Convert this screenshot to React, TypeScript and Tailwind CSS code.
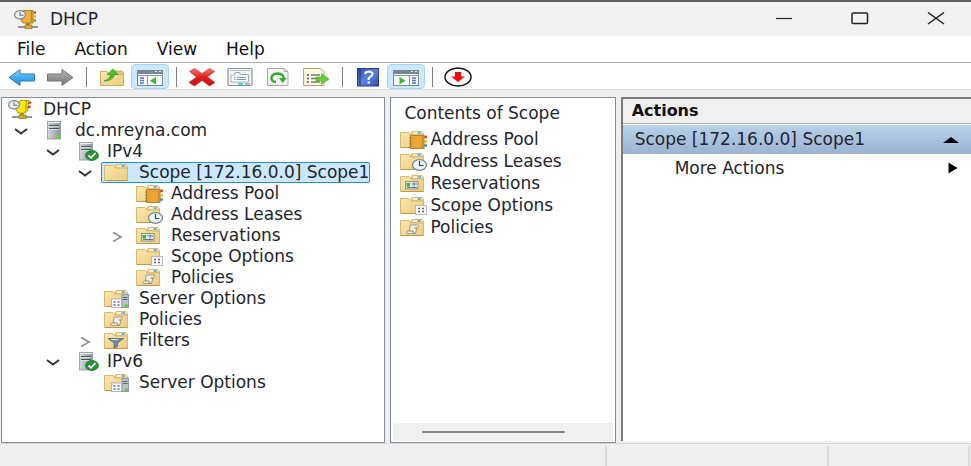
import React from "react";

type IconName =
  | "dhcp"
  | "server"
  | "serverOk"
  | "folder"
  | "pool"
  | "leases"
  | "reservations"
  | "scopeOptions"
  | "policies"
  | "serverOptions"
  | "filters";

function Gradients() {
  return (
    <svg className="absolute size-0" aria-hidden="true">
      <defs>
        <linearGradient id="folderFill" x1="0" y1="0" x2="1" y2="1">
          <stop offset="0" stopColor="#fce7b0" />
          <stop offset="1" stopColor="#ebca7c" />
        </linearGradient>
        <linearGradient id="blueFill" x1="0" y1="0" x2="0" y2="1">
          <stop offset="0" stopColor="#8fd4fb" />
          <stop offset="0.5" stopColor="#42aef0" />
          <stop offset="1" stopColor="#1f86d0" />
        </linearGradient>
        <linearGradient id="grayFill" x1="0" y1="0" x2="0" y2="1">
          <stop offset="0" stopColor="#b5b5b5" />
          <stop offset="1" stopColor="#777777" />
        </linearGradient>
        <linearGradient id="serverFill" x1="0" y1="0" x2="1" y2="0">
          <stop offset="0" stopColor="#d3dade" />
          <stop offset="1" stopColor="#8b969c" />
        </linearGradient>
        <linearGradient id="redFill" x1="0" y1="0" x2="0" y2="1">
          <stop offset="0" stopColor="#f47a7a" />
          <stop offset="0.5" stopColor="#dc2020" />
          <stop offset="1" stopColor="#c81010" />
        </linearGradient>
        <linearGradient id="helpFill" x1="0" y1="0" x2="1" y2="1">
          <stop offset="0" stopColor="#2c48a4" />
          <stop offset="0.5" stopColor="#5f83da" />
          <stop offset="1" stopColor="#2f4fae" />
        </linearGradient>
      </defs>
    </svg>
  );
}

function Folder() {
  return (
    <g>
      <path d="M10 5 L12 1.500 H22 L23.500 3.500 V8 H10Z" fill="#edcf82" stroke="#cfae60" strokeWidth="0.800" />
      <path d="M13 3 H22" stroke="#fff" strokeWidth="1.400" />
      <path d="M17.500 3 H21" stroke="#3d9be0" strokeWidth="1.400" />
      <path d="M0.500 2.500 H9 L11 5 H23.500 V17.500 H0.500Z" fill="url(#folderFill)" stroke="#d2b268" strokeWidth="0.900" />
      <path d="M1 17.500 H23.500" stroke="#bd9950" strokeWidth="1" />
    </g>
  );
}

function Server({ x }: { x: number }) {
  return (
    <g transform={`translate(${x} 0)`}>
      <rect x="0.500" y="0.500" width="13" height="17.500" fill="url(#serverFill)" stroke="#8b959b" strokeWidth="0.800" />
      <path d="M1 1.500 H13" stroke="#eef2f4" />
      <path d="M2 4.500 H12 M2 7.500 H12" stroke="#4c565c" strokeWidth="1.200" />
      <path d="M2 5.500 H12 M2 8.500 H12" stroke="#eef2f4" strokeWidth="0.600" />
      <rect x="8.500" y="14.500" width="4" height="2.500" fill="#63e01f" />
    </g>
  );
}

function Icon({ name, bright = true }: { name: IconName; bright?: boolean }) {
  return (
    <svg viewBox="0 0 28 19" className="h-[19px] w-7 shrink-0" aria-hidden="true">
      {name === "dhcp" && (
        <g>
          <path d="M4 17 H24" stroke="#8a8a8a" strokeWidth="1.800" />
          <path d="M14 11 V16" stroke={bright ? "#b5a514" : "#b9821c"} strokeWidth="4" />
          <rect x="11" y="15" width="7" height="3.500" fill={bright ? "#c5b51a" : "#e0a526"} stroke="#7c6514" strokeWidth="0.600" />
          <path
            d={bright ? "M12 0.500 H21 L19.500 11 L17 13 H10 L8 9.500Z" : "M9 0.500 H19 V13 H9 L7.500 11Z"}
            fill={bright ? "#f5ea14" : "#eeb03a"}
            stroke={bright ? "#a5980e" : "#a97417"}
            strokeWidth="0.900"
          />
          <path
            d={bright ? "M18.500 1 L17.500 12" : "M17.500 1 V12.500"}
            stroke={bright ? "#c2b512" : "#c48822"}
            strokeWidth="1.500"
          />
          {bright ? (
            <path d="M20.500 3.500 L23 2 M20 8 L22.500 6" stroke="#e6231f" strokeWidth="2" />
          ) : (
            <g strokeWidth="2.200">
              <path d="M19.500 2.500 H22" stroke="#e6331f" />
              <path d="M19.500 6.500 H22" stroke="#e8a52b" />
              <path d="M19.500 10.500 H22" stroke="#3fa368" />
            </g>
          )}
          <ellipse cx="6" cy="4.800" rx="5.400" ry="4.200" fill="#edf1f4" stroke="#8a9096" strokeWidth="1.300" />
          <path d="M6 2 V5.300 H9.500" fill="none" stroke="#66707a" strokeWidth="1.100" />
        </g>
      )}
      {name === "server" && <Server x={7} />}
      {name === "serverOk" && (
        <g>
          <Server x={7} />
          <ellipse cx="20" cy="13.500" rx="6.500" ry="5" fill="#279335" stroke="#167024" strokeWidth="0.700" />
          <path d="M16.500 13.500 L19 15.800 L23.500 11" fill="none" stroke="#fff" strokeWidth="1.800" />
        </g>
      )}
      {!["dhcp", "server", "serverOk"].includes(name) && <Folder />}
      {name === "pool" && (
        <g>
          <path d="M24 7 H27" stroke="#e5432b" strokeWidth="2.600" />
          <path d="M24 11.500 H27" stroke="#efc32a" strokeWidth="2.600" />
          <path d="M24 15.500 H27" stroke="#3f9bd8" strokeWidth="2.600" />
          <rect x="10.500" y="5.500" width="13.500" height="13" fill="#eba536" stroke="#b37a20" strokeWidth="0.900" />
          <path d="M9 8 H11.500 M9 11 H11.500 M9 14 H11.500 M9 17 H11.500" stroke="#7c7058" strokeWidth="0.900" />
          <path d="M22.500 6 V18" stroke="#c98a28" strokeWidth="1.200" />
        </g>
      )}
      {name === "leases" && (
        <g>
          <ellipse cx="19.500" cy="13" rx="7" ry="5.300" fill="#e8f4f8" stroke="#7b888f" strokeWidth="1.300" />
          <path d="M19.500 9 V13.500 H23.500" fill="none" stroke="#34464f" strokeWidth="1.200" />
        </g>
      )}
      {name === "reservations" && (
        <g>
          <rect x="5.500" y="7.500" width="12.500" height="7.500" fill="#e4ebe8" stroke="#8f8d78" strokeWidth="0.900" />
          <rect x="6.500" y="9" width="3.500" height="3.500" fill="#38b642" />
          <path d="M11.500 10 H17 M7 13.500 H17" stroke="#647a8c" strokeWidth="1.200" />
          <path d="M14 8 V14.500" stroke="#647a8c" strokeWidth="0.800" />
        </g>
      )}
      {name === "scopeOptions" && (
        <g>
          <rect x="15.500" y="9.500" width="11" height="9" fill="#f8f8f8" stroke="#b5b5b5" strokeWidth="0.900" />
          <path d="M18 12.500 H20 M22 12.500 H24 M18 15.500 H20 M22 15.500 H24" stroke="#5f6579" strokeWidth="1.500" />
        </g>
      )}
      {name === "policies" && (
        <g>
          <path
            d="M10 7 H18 Q19.500 9 17 10 L15.500 15.500 H7 Q5.500 13.500 8 13 H9.500Z"
            fill="#efeee2"
            stroke="#98937c"
            strokeWidth="0.900"
          />
          <path d="M9.500 13 H13 Q13 15 15 15.500 M17 10 H14.500" fill="none" stroke="#807b68" strokeWidth="0.900" />
        </g>
      )}
      {name === "serverOptions" && (
        <g>
          <rect x="7.500" y="10" width="10.500" height="8.500" fill="#f8f8f8" stroke="#b0b0b0" strokeWidth="0.900" />
          <path d="M9.500 13 H11.500 M13.500 13 H15.500 M9.500 16 H11.500 M13.500 16 H15.500" stroke="#5f6b90" strokeWidth="1.500" />
          <rect x="18" y="5.500" width="6.500" height="13" fill="#bac3c8" stroke="#87939a" strokeWidth="0.900" />
          <path d="M19 8.500 H23.500 M19 10.500 H23.500" stroke="#56636b" />
          <rect x="20.500" y="15.500" width="3.500" height="2.200" fill="#4fd51c" />
        </g>
      )}
      {name === "filters" && (
        <g>
          <path d="M4 7.500 H19.500 L13.500 12 V15.500 L10 17 V12Z" fill="#6f8ea6" stroke="#4a677d" strokeWidth="0.800" />
          <path d="M7 8.500 H14" stroke="#d4e4ee" />
        </g>
      )}
    </svg>
  );
}

interface Node {
  label: string;
  icon: IconName;
  open?: boolean;
  selected?: boolean;
  children?: Node[];
}

const server: Node = {
  label: "dc.mreyna.com",
  icon: "server",
  open: true,
  children: [
    {
      label: "IPv4",
      icon: "serverOk",
      open: true,
      children: [
        {
          label: "Scope [172.16.0.0] Scope1",
          icon: "folder",
          open: true,
          selected: true,
          children: [
            { label: "Address Pool", icon: "pool" },
            { label: "Address Leases", icon: "leases" },
            { label: "Reservations", icon: "reservations", open: false },
            { label: "Scope Options", icon: "scopeOptions" },
            { label: "Policies", icon: "policies" },
          ],
        },
        { label: "Server Options", icon: "serverOptions" },
        { label: "Policies", icon: "policies" },
        { label: "Filters", icon: "filters", open: false },
      ],
    },
    {
      label: "IPv6",
      icon: "serverOk",
      open: true,
      children: [{ label: "Server Options", icon: "serverOptions" }],
    },
  ],
};

const contents: { label: string; icon: IconName }[] = [
  { label: "Address Pool", icon: "pool" },
  { label: "Address Leases", icon: "leases" },
  { label: "Reservations", icon: "reservations" },
  { label: "Scope Options", icon: "scopeOptions" },
  { label: "Policies", icon: "policies" },
];

function TreeNode({ node }: { node: Node }) {
  const expandable = node.open !== undefined;
  return (
    <li role="treeitem" aria-expanded={node.open} aria-selected={!!node.selected}>
      <div className="flex h-[21px] items-center">
        {expandable ? (
          <button aria-label={`Toggle ${node.label}`} className="flex h-full w-8 shrink-0 items-center justify-center">
            <svg viewBox="0 0 14 12" className="h-3 w-3.5" fill="none" aria-hidden="true">
              {node.open ? (
                <path d="M1 4 L7 8.500 L13 4" stroke="#333" strokeWidth="2" />
              ) : (
                <path d="M3 2.500 L11 7 L3 11.500" stroke="#959595" strokeWidth="1.800" />
              )}
            </svg>
          </button>
        ) : (
          <span className="w-8 shrink-0" />
        )}
        <div
          className={
            node.selected
              ? "flex h-[21px] items-center gap-[7px] rounded-xs bg-[#cce8ff] pr-px pl-[3px] outline-1 -outline-offset-1 outline-[#2a8ad8]"
              : "flex h-[21px] items-center gap-[7px] pl-[3px]"
          }
        >
          <Icon name={node.icon} />
          <span className="whitespace-nowrap">{node.label}</span>
        </div>
      </div>
      {node.children && (
        <ul role="group" className="pl-8">
          {node.children.map((child) => (
            <TreeNode key={child.label} node={child} />
          ))}
        </ul>
      )}
    </li>
  );
}

function ToolButton({ label, active, children }: { label: string; active?: boolean; children: React.ReactNode }) {
  return (
    <button
      aria-label={label}
      className={
        active
          ? "flex h-[25px] w-[38px] items-center justify-center rounded-sm border border-[#a3d3f7] bg-[#cce8ff]"
          : "flex h-[25px] w-[38px] items-center justify-center"
      }
    >
      <svg viewBox="0 0 28 20" className="h-5 w-7 shrink-0" fill="none" aria-hidden="true">
        {children}
      </svg>
    </button>
  );
}

function Separator() {
  return (
    <span className="flex w-3.5 justify-center">
      <span className="h-5 w-px bg-[#808080]" />
    </span>
  );
}

function Toolbar() {
  return (
    <div role="toolbar" className="flex h-[27px] shrink-0 items-center border-b border-[#dcdcdc] bg-white pt-px pl-[3px]">
      <ToolButton label="Back">
        <path d="M1 10.500 L12 2.500 V7 H26.500 V14 H12 V18.500Z" fill="url(#blueFill)" stroke="#2b7fba" />
      </ToolButton>
      <ToolButton label="Forward">
        <path d="M27 10.500 L16 2.500 V7 H1.500 V14 H16 V18.500Z" fill="url(#grayFill)" stroke="#737373" />
      </ToolButton>
      <Separator />
      <ToolButton label="Up one level">
        <path d="M13 4 H24 L25.500 6 V18 H13Z" fill="#e9c873" stroke="#c9a85c" />
        <path d="M2.500 4.500 H9 L11.500 7.500 H25.500 V18.500 H2.500Z" fill="url(#folderFill)" stroke="#cdac62" />
        <path d="M6 14 Q12 12 12.500 7.500 H9 L15 2 L20 7.500 H16.500 Q15 14 6 14Z" fill="#4cc22f" stroke="#31921c" strokeWidth="0.700" />
      </ToolButton>
      <ToolButton label="Show or hide console tree" active>
        <rect x="1.500" y="3.500" width="25" height="15" fill="#f7f8fa" stroke="#7f8995" />
        <path d="M1 5 H27" stroke="#7b8693" strokeWidth="4" />
        <path d="M19 4.500 H21 M23 4.500 H25" stroke="#e8eef4" />
        <path d="M1.500 8.500 H26.500 M11.500 8.500 V18" stroke="#8e98a3" />
        <path d="M4 11 H8 M4 13.500 H8 M4 16 H8" stroke="#4c7db4" strokeWidth="1.500" />
        <path d="M20 10 V17.500 L14 13.750Z" fill="#3db52c" />
      </ToolButton>
      <Separator />
      <ToolButton label="Delete">
        <path
          d="M1.500 4.500 L6.500 1.500 L14 6.500 L21.500 1.500 L26.500 4.500 L19.500 10 L27 15.500 L21.500 19 L14 13.500 L6.500 19 L1 15.500 L8.500 10Z"
          fill="url(#redFill)"
          stroke="#c93030"
          strokeWidth="0.700"
        />
      </ToolButton>
      <ToolButton label="Properties">
        <rect x="2" y="1.500" width="24" height="17" rx="1" fill="#f3f5f7" stroke="#8c949d" strokeWidth="1.200" />
        <path d="M4 3.500 H24" stroke="#b6bdc5" />
        <path d="M5 8 H9 V5.500 H14 V7.500 H22.500 V15 H5Z" fill="#fff" stroke="#9cabbc" />
        <path d="M8 10.500 H9.500 M11 10.500 H20 M8 12.500 H9.500 M11 12.500 H20" stroke="#7e93ad" />
        <path d="M12 17 H17" stroke="#20c4ee" strokeWidth="1.500" />
        <path d="M19 17 H24" stroke="#9aa2aa" strokeWidth="1.500" />
      </ToolButton>
      <ToolButton label="Refresh">
        <path d="M3.500 1.500 H20 L24 4.500 V18.500 H3.500Z" fill="#f5f5f3" stroke="#a7a7a7" />
        <path d="M20 1.500 V4.500 H24" stroke="#a7a7a7" />
        <path d="M12 15 Q7 14.500 7.500 10.500 Q8.500 6.500 14 6.500 Q19.500 7 19.500 11" stroke="#36ad35" strokeWidth="2.500" />
        <path d="M15 11 H23 L18.500 16Z" fill="#36ad35" />
      </ToolButton>
      <ToolButton label="Export list">
        <path d="M1.500 1.500 H18 L22 4.500 V18.500 H1.500Z" fill="#fdf9df" stroke="#aca681" />
        <path d="M5 8 H7 M5 11.500 H7 M5 15 H7" stroke="#524b8a" strokeWidth="1.500" />
        <path d="M9 8 H18 M9 11.500 H14 M9 15 H18" stroke="#777" strokeWidth="1.300" />
        <path d="M14 10 H19.500 V6.500 L27 12 L19.500 17 V14 H14Z" fill="#64cd3b" stroke="#4aaa2b" strokeWidth="0.700" />
      </ToolButton>
      <Separator />
      <ToolButton label="Help">
        <rect x="3.500" y="1.500" width="21" height="17.500" fill="url(#helpFill)" stroke="#263e88" />
        <path d="M6 2 V19" stroke="#2c4595" strokeWidth="1.500" />
        <path d="M11 7 Q11.500 4.500 15 4.500 Q19 5 18.500 7.500 Q18 9 15.500 10.500 Q14.500 11 14.500 13" stroke="#fff" strokeWidth="2" />
        <path d="M13.500 15.500 H16" stroke="#fff" strokeWidth="2" />
      </ToolButton>
      <ToolButton label="Show or hide action pane" active>
        <rect x="1.500" y="3.500" width="25" height="15" fill="#f7f8fa" stroke="#7f8995" />
        <path d="M1 5 H27" stroke="#7b8693" strokeWidth="4" />
        <path d="M19 4.500 H21 M23 4.500 H25" stroke="#e8eef4" />
        <path d="M1.500 8.500 H26.500 M17.500 8.500 V18" stroke="#8e98a3" />
        <path d="M20 11 H24 M20 13.500 H24 M20 16 H24" stroke="#4c7db4" strokeWidth="1.500" />
        <path d="M7.500 10 V17.500 L13.500 13.750Z" fill="#3db52c" />
      </ToolButton>
      <Separator />
      <ToolButton label="Move down">
        <ellipse cx="14" cy="10" rx="13" ry="9" fill="#fff" stroke="#151515" strokeWidth="1.500" />
        <path d="M11 5 H17 V9.500 H21 L14 15 L7 9.500 H11Z" fill="#fa0505" />
      </ToolButton>
    </div>
  );
}

export default function App() {
  return (
    <div className="flex h-screen flex-col overflow-hidden border-t-2 border-[#606060] bg-[#efefef] font-['DejaVu_Sans',Verdana,sans-serif] text-[17px] leading-[21px] text-[#24242c]">
      <Gradients />
      <header className="flex h-[34px] shrink-0 items-center bg-[#f2f2f2] pr-2 pl-3.5">
        <Icon name="dhcp" bright={false} />
        <h1 className="ml-2 flex-1">DHCP</h1>
        <div className="flex gap-[22px]">
          <button aria-label="Minimize" className="flex h-8 w-[54px] items-center justify-center">
            <svg viewBox="0 0 18 14" className="h-3.5 w-[18px]" aria-hidden="true">
              <path d="M1 6.500 H17" stroke="#222" strokeWidth="1.200" />
            </svg>
          </button>
          <button aria-label="Maximize" className="flex h-8 w-[54px] items-center justify-center">
            <svg viewBox="0 0 18 14" className="h-3.5 w-[18px]" fill="none" aria-hidden="true">
              <rect x="1" y="1" width="15.500" height="10.500" rx="1" stroke="#222" strokeWidth="1.500" />
            </svg>
          </button>
          <button aria-label="Close" className="flex h-8 w-[54px] items-center justify-center">
            <svg viewBox="0 0 18 14" className="h-3.5 w-[18px]" fill="none" aria-hidden="true">
              <path d="M1 0.500 L17 12 M17 0.500 L1 12" stroke="#222" strokeWidth="1.500" />
            </svg>
          </button>
        </div>
      </header>

      <nav className="flex h-[27px] shrink-0 items-center gap-[29px] border-b border-[#b0b0b0] bg-white pl-[17px] text-[#111]">
        <button>File</button>
        <button>Action</button>
        <button>View</button>
        <button>Help</button>
      </nav>

      <Toolbar />

      <main className="grid min-h-0 flex-1 grid-cols-[384fr_225fr_350fr] gap-[5px] pt-[7px] pl-px">
        <section className="min-w-0 overflow-hidden border border-[#868c98] bg-white pt-px pl-[3px]">
          <ul role="tree" aria-label="Console tree">
            <li role="treeitem" aria-expanded="true" aria-selected="false">
              <div className="flex h-[21px] items-center gap-[7px] pl-[3px]">
                <Icon name="dhcp" />
                <span>DHCP</span>
              </div>
              <ul role="group">
                <TreeNode node={server} />
              </ul>
            </li>
          </ul>
        </section>

        <section className="flex min-w-0 flex-col overflow-hidden border border-[#868c98] bg-white">
          <h2 className="flex h-[30px] shrink-0 items-center pl-[13px] whitespace-nowrap">Contents of Scope</h2>
          <ul className="flex-1 pl-[9px]">
            {contents.map((item) => (
              <li key={item.label} className="flex h-[22px] items-center gap-0.5">
                <Icon name={item.icon} />
                <span className="whitespace-nowrap">{item.label}</span>
              </li>
            ))}
          </ul>
          <div className="mx-0.5 mb-px flex h-[18px] items-center bg-[#f0f0f0] pr-[48px] pl-[29px]">
            <div className="h-0.5 w-full rounded-full bg-[#868686]" />
          </div>
        </section>

        <section className="mb-0.5 min-w-0 overflow-hidden border-t-2 border-l-2 border-[#7a7a7a] bg-white">
          <h2 className="flex h-[25px] items-center border-b border-[#a8a8a8] bg-[#f0f0f0] pl-[9px] text-base font-bold text-[#111]">
            Actions
          </h2>
          <button className="mt-px flex h-[29px] w-full items-center justify-between bg-linear-to-b from-[#b9d1ea] to-[#99b4d1] pr-3 pl-3">
            <span className="whitespace-nowrap">Scope [172.16.0.0] Scope1</span>
            <svg viewBox="0 0 16 8" className="h-2 w-4" aria-hidden="true">
              <path d="M0 7 L8 1 L16 7Z" fill="#000" />
            </svg>
          </button>
          <button className="flex h-7 w-full items-center justify-between pr-[13px] pl-[52px]">
            <span>More Actions</span>
            <svg viewBox="0 0 10 12" className="h-3 w-2.5" aria-hidden="true">
              <path d="M0.500 0.500 L9.500 6 L0.500 11.500Z" fill="#000" />
            </svg>
          </button>
        </section>
      </main>

      <footer className="grid h-[23px] shrink-0 grid-cols-[606fr_222fr_141fr] border-t border-[#d6d6d6] pt-0.5 pr-px">
        <span className="border-r-2 border-[#dadada]" />
        <span className="border-r-2 border-[#dadada]" />
        <span className="border-r-2 border-[#dadada]" />
      </footer>
    </div>
  );
}
